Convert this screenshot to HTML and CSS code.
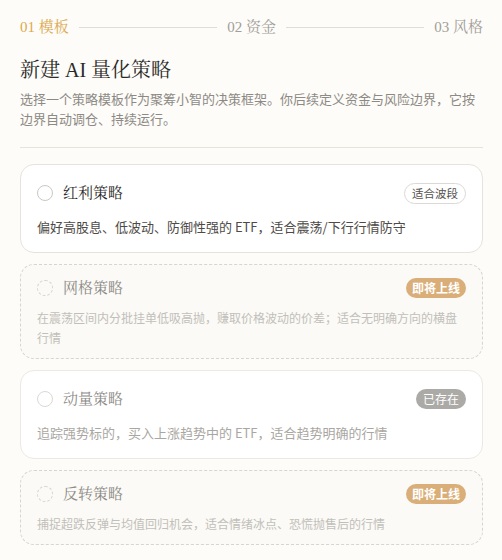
FILE: index.html
```html
<!DOCTYPE html>
<html lang="zh-CN">
<head>
<meta charset="utf-8">
<title>新建 AI 量化策略</title>
<link rel="stylesheet" href="styles.css">
</head>
<body>
<div class="page">
  <div class="stepper">
    <span class="step active">01 模板</span>
    <span class="step-line"></span>
    <span class="step">02 资金</span>
    <span class="step-line"></span>
    <span class="step">03 风格</span>
  </div>
  <h1 class="title">新建 AI 量化策略</h1>
  <p class="intro">选择一个策略模板作为聚筹小智的决策框架。你后续定义资金与风险边界，它按边界自动调仓、持续运行。</p>
  <div class="divider"></div>
  <div class="cards">
    <div class="card card-solid">
      <div class="card-head">
        <span class="radio"></span>
        <span class="card-title">红利策略</span>
        <span class="tag">适合波段</span>
      </div>
      <p class="card-desc">偏好高股息、低波动、防御性强的 ETF，适合震荡/下行行情防守</p>
    </div>
    <div class="card card-dashed">
      <div class="card-head">
        <span class="radio radio-dashed"></span>
        <span class="card-title muted">网格策略</span>
        <span class="badge badge-gold">即将上线</span>
      </div>
      <p class="card-desc faint">在震荡区间内分批挂单低吸高抛，赚取价格波动的价差；适合无明确方向的横盘行情</p>
    </div>
    <div class="card card-solid card-exists">
      <div class="card-head">
        <span class="radio radio-light"></span>
        <span class="card-title muted">动量策略</span>
        <span class="badge badge-gray">已存在</span>
      </div>
      <p class="card-desc soft">追踪强势标的，买入上涨趋势中的 ETF，适合趋势明确的行情</p>
    </div>
    <div class="card card-dashed">
      <div class="card-head">
        <span class="radio radio-dashed"></span>
        <span class="card-title muted">反转策略</span>
        <span class="badge badge-gold">即将上线</span>
      </div>
      <p class="card-desc faint">捕捉超跌反弹与均值回归机会，适合情绪冰点、恐慌抛售后的行情</p>
    </div>
  </div>
</div>
</body>
</html>
```

FILE: styles.css
```css
* { box-sizing: border-box; }
html, body {
  margin: 0;
  padding: 0;
  background: #fdfcf8;
}
body {
  font-family: "Noto Sans CJK SC", "Noto Sans", sans-serif;
  color: #333;
}
.page {
  padding: 17px 19px 0 20px;
}
.stepper {
  display: flex;
  align-items: center;
  height: 20px;
  font-family: "Liberation Serif", "Noto Serif CJK SC", "Noto Sans CJK SC", serif;
  font-size: 15px;
  color: #a19e99;
}
.step { white-space: nowrap; line-height: 20px; }
.step.active { color: #dca94e; }
.step-line {
  flex: 1;
  height: 1px;
  background: #e0ddd7;
  margin: 0 10px;
}
.title {
  margin: 19px 0 0;
  font-family: "Liberation Serif", "Noto Serif CJK SC", "Noto Sans CJK SC", serif;
  font-weight: normal;
  font-size: 20px;
  line-height: 28px;
  color: #2b2a28;
}
.intro {
  margin: 5px 0 0;
  font-size: 13px;
  line-height: 20px;
  color: #8d8a85;
}
.divider {
  margin-top: 18px;
  height: 1px;
  background: #e6e3dd;
}
.cards {
  display: flex;
  flex-direction: column;
  gap: 11px;
  margin-top: 16px;
}
.card {
  border-radius: 14px;
}
.card-solid {
  background: #ffffff;
  border: 1px solid #e6e3dd;
  padding: 18px 16px 15px 16px;
}
.card-exists { border-color: #ece9e4; }
.card-dashed {
  background: #fbfaf6;
  border: 1px dashed #d8d5cf;
  padding: 13px 16px 10px 16px;
}
.card-head {
  display: flex;
  align-items: center;
  height: 20px;
}
.radio {
  width: 16px;
  height: 16px;
  border-radius: 50%;
  border: 1px solid #cbc8c3;
  flex: none;
}
.radio-light { border-color: #dcd9d4; }
.radio-dashed { border: 1px dashed #d6d3ce; }
.card-title {
  margin-left: 10px;
  flex: 1;
  font-family: "Liberation Serif", "Noto Serif CJK SC", "Noto Sans CJK SC", serif;
  font-size: 15px;
  line-height: 20px;
  color: #2b2a28;
}
.card-title.muted { color: #8c8a86; }
.tag {
  height: 21px;
  padding: 0 7px;
  border: 1px solid #dcd9d4;
  border-radius: 11px;
  font-size: 11.5px;
  line-height: 19px;
  color: #55524e;
  background: #fff;
}
.badge {
  height: 20px;
  border-radius: 10px;
  font-size: 12px;
  line-height: 20px;
  font-weight: bold;
  color: #fff;
  padding: 0 6px;
}
.badge-gold { background: #d9ae78; }
.badge-gray { background: #abaaa7; font-weight: normal; padding: 0 7px; }
.card-desc {
  margin: 14px 0 0;
  font-size: 13px;
  line-height: 20px;
  color: #4e4b47;
}
.card-dashed .card-desc { margin-top: 10px; font-size: 12px; }
.card-desc.soft { color: #aaa7a2; }
.card-desc.faint { color: #c2bfba; }
```
